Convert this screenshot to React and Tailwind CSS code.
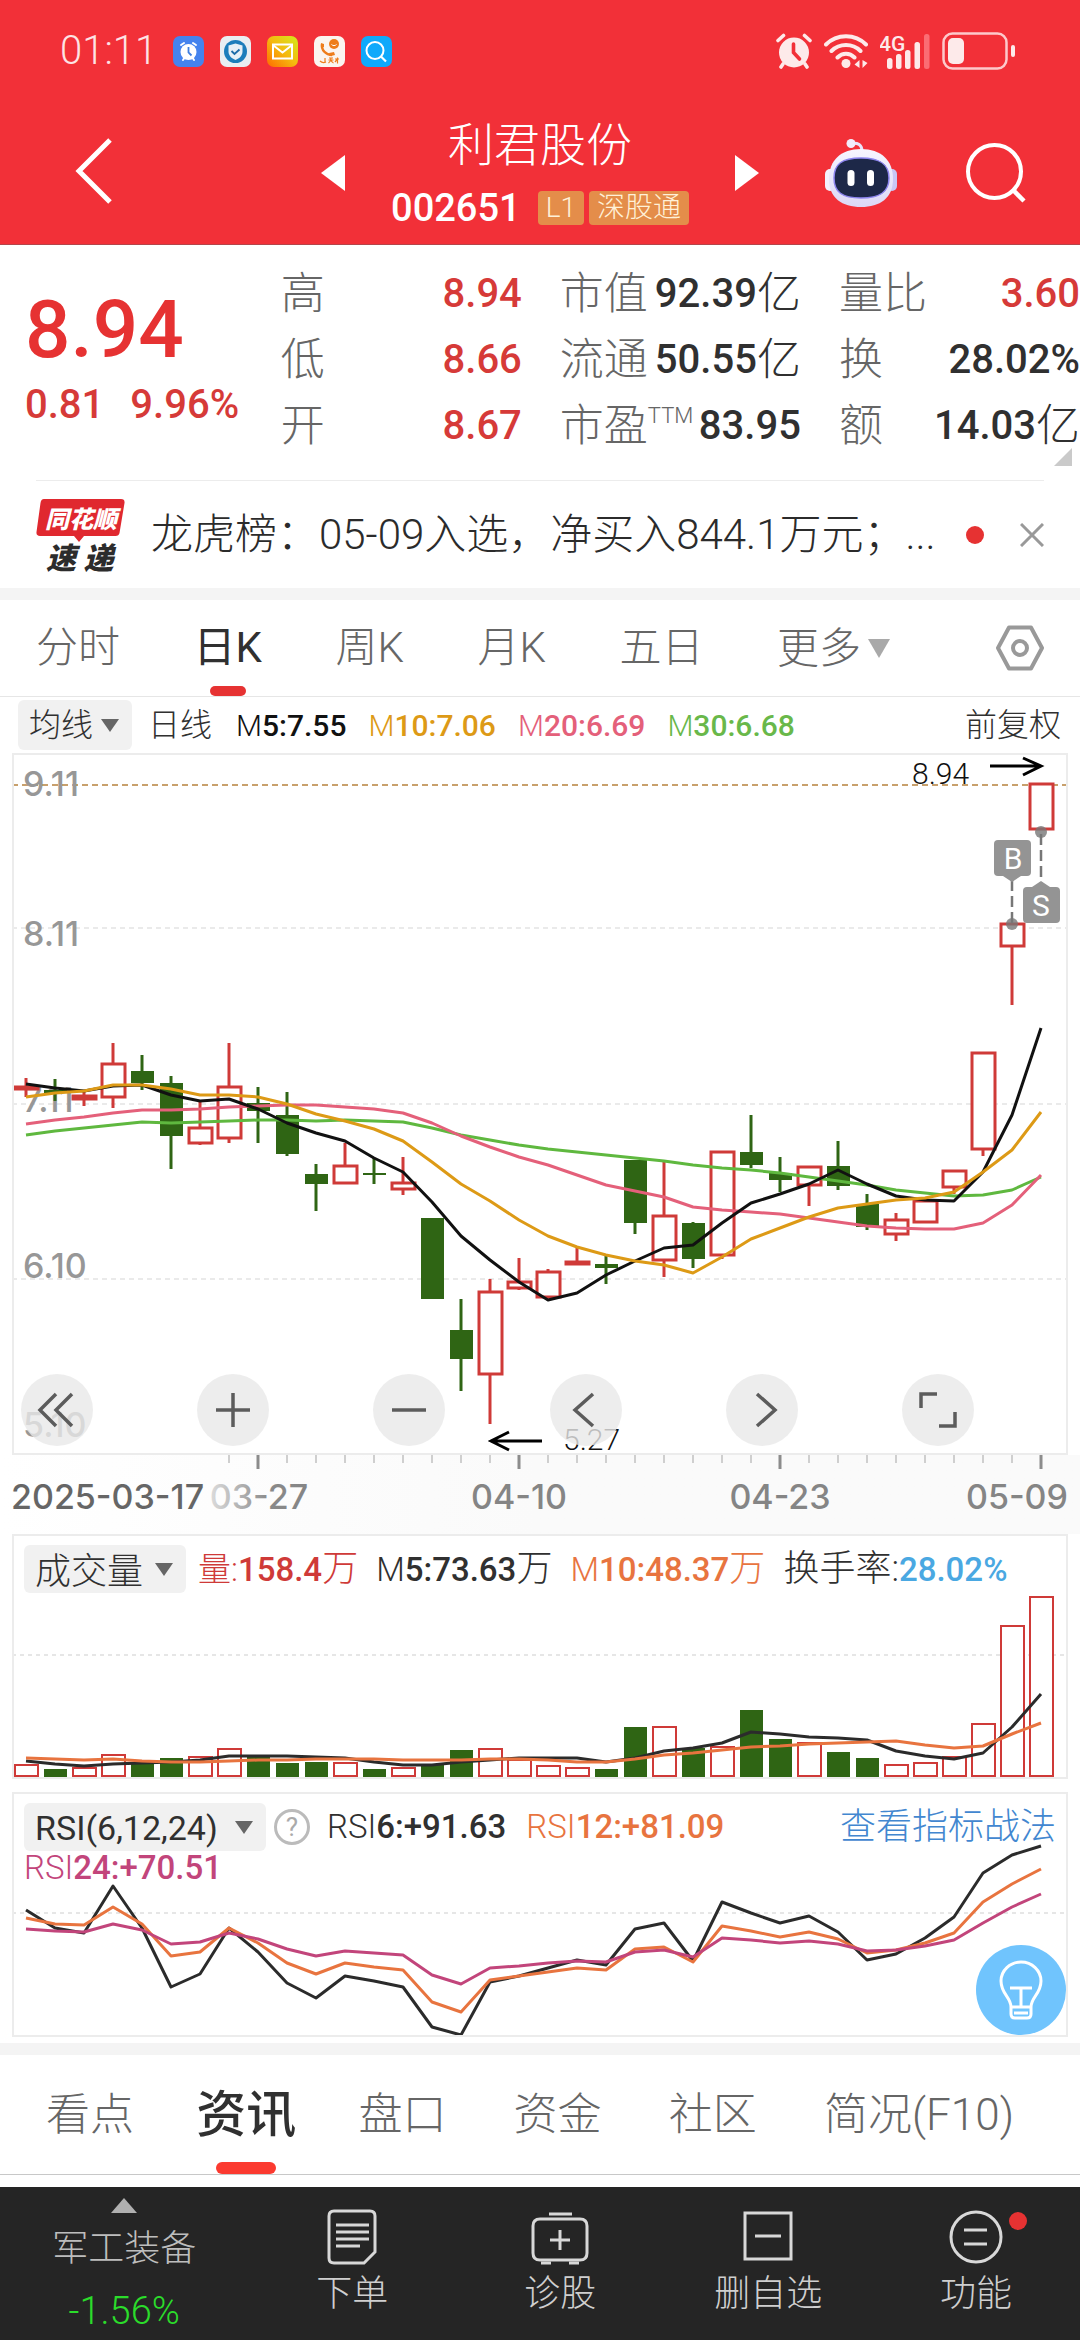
import React, { useState } from "react";

const STEP = 29;
const FIRST_X = 14;
const RED = "#cf3a38";
const GREEN = "#2f6514";

// up, body top, body bottom, wick top, wick bottom
const CANDLES = [
  [1, 332, 336, 324, 343],
  [0, 336, 339, 325, 347],
  [1, 341, 346, 338, 352],
  [1, 309, 344, 289, 354],
  [0, 317, 329, 301, 336],
  [0, 329, 382, 322, 415],
  [1, 373, 390, 348, 391],
  [1, 332, 385, 289, 389],
  [0, 349, 357, 333, 389],
  [0, 361, 400, 338, 402],
  [0, 420, 430, 410, 457],
  [1, 411, 430, 389, 430],
  [0, 419, 421, 404, 430],
  [1, 428, 436, 403, 441],
  [0, 464, 545, 464, 545],
  [0, 576, 605, 545, 637],
  [1, 537, 621, 525, 670],
  [1, 527, 535, 504, 536],
  [1, 517, 544, 515, 544],
  [1, 507, 511, 494, 511],
  [0, 510, 514, 502, 530],
  [0, 406, 469, 406, 480],
  [1, 461, 507, 408, 523],
  [0, 469, 505, 468, 514],
  [1, 397, 502, 397, 505],
  [0, 398, 411, 361, 414],
  [0, 419, 426, 403, 438],
  [1, 412, 432, 412, 452],
  [0, 412, 432, 387, 436],
  [0, 450, 473, 440, 476],
  [1, 465, 481, 459, 487],
  [1, 446, 469, 446, 469],
  [1, 416, 434, 416, 440],
  [1, 298, 396, 298, 402],
  [1, 169, 193, 169, 251],
  [1, 29, 76, 29, 76],
];

const MA_LINES = [
  {
    color: "#5fb83f",
    ys: [381, 377, 374, 371, 368, 369, 368, 367, 366, 366, 367, 366, 367, 368, 374, 381, 386, 391, 395, 398, 401, 404, 407, 411, 414, 416, 419, 423, 427, 431, 436, 439, 442, 441, 436, 423],
  },
  {
    color: "#e4607a",
    ys: [370, 366, 363, 359, 356, 356, 355, 353, 352, 351, 351, 353, 355, 359, 369, 382, 393, 403, 411, 421, 431, 437, 443, 453, 456, 458, 460, 464, 468, 472, 474, 475, 475, 469, 451, 421],
  },
  {
    color: "#111111",
    ys: [330, 334, 337, 332, 331, 341, 347, 345, 355, 369, 379, 387, 404, 418, 448, 482, 506, 528, 546, 539, 521, 507, 494, 491, 469, 449, 440, 430, 416, 430, 442, 446, 447, 418, 361, 274],
  },
  {
    color: "#dd9a16",
    ys: [343, 339, 337, 331, 331, 335, 341, 341, 343, 350, 360, 367, 375, 387, 408, 430, 447, 466, 482, 493, 501, 507, 511, 519, 503, 485, 474, 463, 454, 450, 446, 444, 438, 418, 396, 358],
  },
];

const VOLUME_TOPS = [231, 235, 234, 221, 229, 224, 223, 215, 223, 229, 228, 229, 235, 234, 231, 216, 215, 226, 232, 234, 235, 193, 193, 214, 213, 176, 205, 209, 218, 224, 231, 229, 223, 190, 92, 63];

const VOLUME_LINES = [
  {
    color: "#2b2b2b",
    ys: [227, 230, 232, 230, 229, 228, 226, 222, 222, 222, 223, 224, 228, 231, 231, 228, 226, 224, 224, 224, 228, 224, 217, 214, 209, 198, 200, 203, 204, 206, 217, 222, 225, 219, 193, 160],
  },
  {
    color: "#e8743f",
    ys: [224, 225, 226, 225, 227, 228, 228, 227, 226, 226, 225, 225, 225, 226, 226, 226, 225, 225, 226, 228, 228, 225, 221, 219, 216, 213, 212, 210, 209, 208, 207, 211, 214, 212, 200, 189],
  },
];

const RSI_LINES = [
  {
    color: "#2b2b2b",
    ys: [118, 136, 141, 94, 136, 195, 182, 136, 160, 191, 206, 184, 189, 195, 235, 243, 190, 184, 176, 168, 173, 137, 131, 169, 110, 121, 131, 124, 140, 168, 162, 146, 125, 81, 63, 54],
  },
  {
    color: "#e8743f",
    ys: [126, 132, 133, 115, 132, 164, 160, 136, 151, 171, 182, 171, 175, 178, 210, 220, 188, 184, 180, 176, 178, 157, 155, 170, 134, 139, 145, 140, 147, 161, 158, 151, 141, 110, 92, 77],
  },
  {
    color: "#c2457b",
    ys: [137, 139, 140, 132, 138, 152, 150, 141, 147, 157, 164, 159, 161, 163, 183, 192, 176, 174, 171, 169, 170, 160, 158, 165, 146, 148, 151, 149, 152, 159, 158, 154, 148, 131, 115, 102],
  },
];

const QUOTES = [
  { label: "高", value: "8.94", up: true },
  { label: "市值", value: "92.39", unit: "亿" },
  { label: "量比", value: "3.60", up: true },
  { label: "低", value: "8.66", up: true },
  { label: "流通", value: "50.55", unit: "亿" },
  { label: "换", value: "28.02%" },
  { label: "开", value: "8.67", up: true },
  { label: "市盈", sup: "TTM", value: "83.95" },
  { label: "额", value: "14.03", unit: "亿" },
];

const PERIODS = ["分时", "日K", "周K", "月K", "五日"];
const SECTIONS = ["看点", "资讯", "盘口", "资金", "社区", "简况(F10)"];

const xAt = (i) => FIRST_X + STEP * i;
const toPoints = (ys) => ys.map((y, i) => `${xAt(i)},${y}`).join(" ");

function Lines({ lines }) {
  return lines.map((l) => (
    <polyline
      key={l.color}
      points={toPoints(l.ys)}
      fill="none"
      stroke={l.color}
      strokeWidth="3"
      strokeLinejoin="round"
    />
  ));
}

/* ---------- status bar ---------- */

function StatusBar() {
  return (
    <div className="flex h-[102px] items-center justify-between pl-[60px] pr-[64px]">
      <div className="flex items-center gap-4">
        <span className="text-[40px] leading-none font-light text-[#fde3e4]">01:11</span>
        <svg width="31" height="31" viewBox="0 0 31 31">
          <rect width="31" height="31" rx="7" fill="#4583ee" />
          <circle cx="15.500" cy="16" r="8" fill="#fff" />
          <path d="M8 9l3-2M23 9l-3-2M10 24l2-3M21 24l-2-3" stroke="#fff" strokeWidth="2" strokeLinecap="round" />
          <path d="M15.500 11v5.500l3 3" stroke="#3f7fe0" strokeWidth="1.800" fill="none" />
        </svg>
        <svg width="31" height="31" viewBox="0 0 31 31">
          <rect width="31" height="31" rx="7" fill="#e9eef2" />
          <circle cx="15.500" cy="15.500" r="11.500" fill="#1c7dbb" />
          <path d="M15.500 7.500l7 2v6c0 4-3 7-7 8.500-4-1.500-7-4.500-7-8.500v-6z" fill="#e6f0f6" />
          <path d="M11.500 15l3 3 5-4.500" stroke="#1c6ca8" strokeWidth="1.800" fill="none" />
        </svg>
        <svg width="31" height="31" viewBox="0 0 31 31">
          <defs>
            <linearGradient id="mail" x1="0" y1="1" x2="1" y2="0">
              <stop offset="0" stopColor="#ff6a00" />
              <stop offset="0.5" stopColor="#f5b90f" />
              <stop offset="1" stopColor="#d2ec1c" />
            </linearGradient>
          </defs>
          <rect width="31" height="31" rx="7" fill="url(#mail)" />
          <rect x="6" y="8.500" width="19" height="14" fill="none" stroke="#fff" strokeWidth="2" />
          <path d="M6.500 9.500l9 7 9-7" stroke="#fff" strokeWidth="2" fill="none" />
        </svg>
        <svg width="31" height="31" viewBox="0 0 31 31">
          <rect width="31" height="31" rx="7" fill="#fbf5f0" />
          <circle cx="20" cy="8" r="5" fill="#ee7d1b" />
          <path d="M8 8c-1 6 4 11 10 11" stroke="#ee7d1b" strokeWidth="2.500" fill="none" />
          <path d="M7 7l3 1v3l-3 1zM15 17l5-1 1 3-4 1z" fill="#ee7d1b" />
          <path d="M17.500 8.500c1.500 1.500 3.500 1.500 5 0" stroke="#fff" fill="none" />
          <path d="M6 25c2 2 4 2 6 1M11 22v4M15 22h4M14.500 24h5M17 22c0 2-1 4-2.500 5M17 24c.5 1.500 1 2.500 2.500 3M21 23h4M23.500 21.500v6M23.500 23l-2.500 3" stroke="#ee7d1b" strokeWidth="1.200" fill="none" />
        </svg>
        <svg width="31" height="31" viewBox="0 0 31 31">
          <rect width="31" height="31" rx="7" fill="#0fa9fb" />
          <circle cx="14" cy="14.500" r="8.500" fill="none" stroke="#fff" strokeWidth="2" />
          <path d="M20 20.500l5 5" stroke="#fff" strokeWidth="2.200" />
        </svg>
      </div>
      <div className="flex items-center gap-3 text-[#fdeaea]">
        <svg width="36" height="36" viewBox="0 0 36 36" fill="none">
          <circle cx="18" cy="19.500" r="15" fill="currentColor" />
          <path d="M2 7.500L7.500 2.500M34 7.500L28.500 2.500M7 31l-2 3M29 31l2 3" stroke="currentColor" strokeWidth="3.600" strokeLinecap="round" />
          <path d="M17.500 11v8.500l6 6.500" stroke="#f23038" strokeWidth="3.600" strokeLinecap="round" />
        </svg>
        <svg width="44" height="36" viewBox="0 0 44 36" fill="none">
          <path d="M2 11.500c11-11 29-11 40 0M7.500 18c8-8 21-8 29 0M13.500 24.500c5-5 12-5 17 0" stroke="currentColor" strokeWidth="4" strokeLinecap="round" />
          <circle cx="22" cy="30.500" r="4.500" fill="currentColor" />
          <path d="M35.500 27v8l-5-3.500zM38.500 27v8l5-5z" fill="currentColor" />
        </svg>
        <svg width="50" height="36" viewBox="0 0 50 36" className="font-medium">
          <text x="-1" y="18" fontSize="21" fill="currentColor">4G</text>
          <rect x="7" y="25" width="5.500" height="11" rx="2.500" fill="currentColor" />
          <rect x="16" y="21" width="5.500" height="15" rx="2.500" fill="currentColor" />
          <rect x="25" y="17" width="5.500" height="19" rx="2.500" fill="currentColor" />
          <rect x="34.500" y="9" width="5.500" height="27" rx="2.500" fill="currentColor" />
          <rect x="44" y="1" width="5.500" height="35" rx="2.500" fill="#fb6d74" />
        </svg>
        <svg width="74" height="38" viewBox="0 0 74 38" fill="none">
          <rect x="1.500" y="1.500" width="63" height="35" rx="9" stroke="#fdc9cb" strokeWidth="2.500" />
          <rect x="6" y="6" width="16" height="26" rx="5" fill="currentColor" />
          <rect x="69" y="13" width="4" height="12" rx="2" fill="currentColor" />
        </svg>
      </div>
    </div>
  );
}

function Robot() {
  return (
    <svg width="74" height="70" viewBox="0 0 74 70">
      <defs>
        <linearGradient id="shell" x1="0" y1="0" x2="0" y2="1">
          <stop offset="0" stopColor="#f7f5ff" />
          <stop offset="1" stopColor="#dcd8f6" />
        </linearGradient>
      </defs>
      <path d="M27 5.500c7-1 11 1 11 8" stroke="#e9e4fa" strokeWidth="3" fill="none" />
      <circle cx="27" cy="5.500" r="4.500" fill="#f2ecfb" />
      <rect x="1" y="31" width="10" height="22" rx="5" fill="#f4f1fd" />
      <rect x="63" y="31" width="10" height="22" rx="5" fill="#c9c7f5" />
      <path d="M37 11c20 0 32 11 32 30S56 69 37 69 5 60 5 41s12-30 32-30z" fill="url(#shell)" />
      <path d="M37 20c19 0 28 6 28 20s-9 20-28 20S10 54 10 40s8-20 27-20z" fill="#1d2848" stroke="#8c84ee" strokeWidth="1.500" />
      <rect x="23.500" y="32" width="7" height="16" rx="3.500" fill="#fff" />
      <rect x="43" y="32" width="7" height="16" rx="3.500" fill="#fff" />
    </svg>
  );
}

function Header() {
  return (
    <header className="border-b border-[#b5454a] bg-[#f23038] text-white">
      <StatusBar />
      <div className="grid h-[142px] grid-cols-[1fr_auto_1fr] items-center">
        <button aria-label="返回" className="justify-self-start pb-1 pl-[75px]">
          <svg width="38" height="66" viewBox="0 0 38 66" fill="none">
            <path d="M35 2L4 33l31 31" stroke="#fff" strokeWidth="5" />
          </svg>
        </button>
        <div className="flex w-[438px] items-center justify-between">
          <button aria-label="上一只">
            <svg width="24" height="36" viewBox="0 0 24 36">
              <path d="M24 0v36L0 18z" fill="#fff" />
            </svg>
          </button>
          <div className="flex flex-col items-center pt-2">
            <h1 className="text-[46px] leading-[62px] font-light">利君股份</h1>
            <div className="flex h-16 items-center gap-[5px]">
              <span className="pr-3 text-[38px] leading-none font-medium">002651</span>
              <span className="flex h-[34px] items-center rounded-sm bg-[#e48d4a] px-2 text-[28px] font-light text-[#fff1d8]">L1</span>
              <span className="flex h-[34px] items-center rounded-sm bg-[#e48d4a] px-2 text-[28px] font-light text-[#fff1d8]">深股通</span>
            </div>
          </div>
          <button aria-label="下一只">
            <svg width="24" height="36" viewBox="0 0 24 36">
              <path d="M0 0v36l24-18z" fill="#fff" />
            </svg>
          </button>
        </div>
        <div className="flex items-center gap-[68px] justify-self-end pr-[54px]">
          <button aria-label="智能助手">
            <Robot />
          </button>
          <button aria-label="搜索">
            <svg width="60" height="60" viewBox="0 0 60 60" fill="none" stroke="#fff">
              <circle cx="28.500" cy="28.500" r="26.500" strokeWidth="4" />
              <path d="M47 47l11 11" strokeWidth="4.500" />
            </svg>
          </button>
        </div>
      </div>
    </header>
  );
}

/* ---------- quote ---------- */

function QuotePanel() {
  return (
    <section className="relative flex h-[235px] pt-4">
      <div className="w-[26%] shrink-0 pl-[25px] pt-[28px] font-medium text-[#e63232]">
        <p className="text-[80px] leading-[82px]">8.94</p>
        <p className="flex gap-[26px] pt-[10px] text-[40px] leading-[48px] text-[#d63a38]">
          <span>0.81</span>
          <span>9.96%</span>
        </p>
      </div>
      <dl className="grid flex-1 auto-rows-[66px] grid-cols-3 gap-x-[38px]">
        {QUOTES.map((q) => (
          <div key={q.label} className="flex items-center justify-between whitespace-nowrap">
            <dt className="flex text-[44px] leading-[66px] font-light text-[#666]">
              {q.label}
              {q.sup && <sup className="top-0 self-start text-[22px] leading-[46px]">{q.sup}</sup>}
            </dt>
            <dd
              className={`flex items-center text-[40px] leading-[66px] font-medium ${
                q.up ? "text-[#d63a38]" : "text-[#303030]"
              }`}
            >
              {q.value}
              {q.unit && <span className="text-[44px] font-light">{q.unit}</span>}
            </dd>
          </div>
        ))}
      </dl>
      <svg className="absolute right-2 bottom-[14px]" width="18" height="18" viewBox="0 0 18 18">
        <path d="M18 0v18H0z" fill="#cacaca" />
      </svg>
    </section>
  );
}

function NewsBar() {
  return (
    <section className="mx-[36px] flex h-[108px] items-center border-t border-[#ececec]">
      <svg width="90" height="74" viewBox="0 0 90 74" className="shrink-0 font-black italic">
        <path d="M8 1h77q4 0 3.500 4l-5 30q-.6 3-4 3H48l-5 6-5-6H4q-4 0-3.500-4l4-29q.5-4 3.500-4z" fill="#e0282f" />
        <text x="9" y="30" fontSize="24" fill="#fff">同花顺</text>
        <text x="10" y="71" fontSize="30" fill="#2c2c2c">速 递</text>
      </svg>
      <a href="#news" className="ml-[25px] min-w-0 flex-1 truncate text-[42px] leading-[60px] font-light text-[#2b2b2b]">
        龙虎榜：05-09入选，净买入844.1万元；...
      </a>
      <span className="mr-[36px] size-[18px] rounded-full bg-[#e63232]" />
      <button aria-label="关闭">
        <svg width="24" height="24" viewBox="0 0 24 24">
          <path d="M1 1l22 22M23 1L1 23" stroke="#999" strokeWidth="3" />
        </svg>
      </button>
    </section>
  );
}

function PeriodTabs({ period, onChange }) {
  return (
    <nav className="flex h-[97px] items-stretch justify-between border-b border-[#e6e6e6] pr-[36px] pl-[36px] text-[42px] font-light text-[#666]">
      <div className="flex w-[854px] items-stretch justify-between">
        {PERIODS.map((p) => (
          <button
            key={p}
            onClick={() => onChange(p)}
            className={`flex flex-col items-center justify-end ${p === period ? "font-normal text-[#303030]" : ""}`}
          >
            <span className="leading-[76px]">{p}</span>
            <span className={`h-[10px] w-[36px] rounded-md ${p === period ? "bg-[#e63232]" : ""}`} />
          </button>
        ))}
        <button aria-haspopup="menu" className="flex items-center gap-[7px]">
          更多
          <svg width="22" height="19" viewBox="0 0 22 19">
            <path d="M0 0h22L11 19z" fill="#a9a9a9" />
          </svg>
        </button>
      </div>
      <button aria-label="设置">
        <svg width="48" height="48" viewBox="0 0 48 48" fill="none" stroke="#999" strokeWidth="4">
          <path d="M13 3.500h22L46 24 35 44.500H13L2 24z" strokeLinejoin="round" />
          <circle cx="24" cy="24" r="7" />
        </svg>
      </button>
    </nav>
  );
}

/* ---------- charts ---------- */

function PickList({ label, options, className }) {
  return (
    <div className={`relative flex shrink-0 items-center rounded-md bg-[#f1f1f1] text-[#303030] ${className}`}>
      <select aria-label={label} className="h-full w-full appearance-none bg-transparent pl-[11px]">
        {options.map((o) => (
          <option key={o}>{o}</option>
        ))}
      </select>
      <svg className="pointer-events-none absolute right-[13px]" width="18" height="13" viewBox="0 0 18 13">
        <path d="M0 0h18L9 13z" fill="#666" />
      </svg>
    </div>
  );
}

function Reading({ name, value, unit, className }) {
  return (
    <span className={`whitespace-nowrap font-medium ${className}`}>
      <span className="font-light">{name}</span>
      {value}
      {unit && <span className="text-[36px] font-light">{unit}</span>}
    </span>
  );
}

function MaLegend() {
  return (
    <div className="flex h-[56px] items-center pr-[19px] pl-[18px] text-[30px] text-[#303030]">
      <PickList
        label="主图指标"
        options={["均线", "BOLL"]}
        className="h-[50px] w-[114px] text-[32px] font-light"
      />
      <span className="ml-4 text-[32px] font-light">日线</span>
      <div className="ml-6 flex flex-1 gap-[22px]">
        <Reading name="M" value="5:7.55" className="text-[#111]" />
        <Reading name="M" value="10:7.06" className="text-[#dd9a16]" />
        <Reading name="M" value="20:6.69" className="text-[#e4607a]" />
        <Reading name="M" value="30:6.68" className="text-[#69b84a]" />
      </div>
      <button className="text-[32px] font-light">前复权</button>
    </div>
  );
}

function CandleSvg() {
  return (
    <svg viewBox="2 1 1052 698" className="col-start-1 row-start-1 block w-full">
      <line x1="0" x2="1056" y1="31" y2="31" stroke="#c8a06c" strokeWidth="2" strokeDasharray="6 4" />
      {[174, 350, 525].map((y) => (
        <line key={y} x1="0" x2="1056" y1={y} y2={y} stroke="#e3e3e3" strokeWidth="1.500" strokeDasharray="5 4" />
      ))}
      <g className="font-['Inter',sans-serif] font-medium" fontSize="34" fill="#979797">
        <text x="11" y="42">9.11</text>
        <text x="11" y="192">8.11</text>
        <text x="11" y="358">7.11</text>
        <text x="11" y="524">6.10</text>
        <text x="11" y="683">5.10</text>
      </g>
      {CANDLES.map(([up, top, bottom, high, low], i) => {
        const x = xAt(i);
        const color = up ? RED : GREEN;
        return (
          <g key={i} stroke={color} strokeWidth="3">
            {high < top && <line x1={x} x2={x} y1={high} y2={top} />}
            {low > bottom && <line x1={x} x2={x} y1={bottom} y2={low} />}
            {up ? (
              <rect
                x={x - 11}
                y={top + 1}
                width="23"
                height={Math.max(bottom - top - 2, 2)}
                fill="#fff"
              />
            ) : (
              <rect x={x - 11} y={top} width="23" height={bottom - top} fill={color} stroke="none" />
            )}
          </g>
        );
      })}
      <Lines lines={MA_LINES} />

      {/* high and low of the visible range */}
      <g fontSize="30" fill="#111" className="font-light">
        <text x="900" y="30">8.94</text>
        <text x="551" y="696">5.27</text>
      </g>
      <g stroke="#000" strokeWidth="3" fill="none">
        <path d="M978 12h51M1011 4l18 8-18 9" />
        <path d="M530 687h-51M497 678l-18 9 18 9" />
      </g>

      {/* trade marks */}
      <g stroke="#777" strokeWidth="2.500" strokeDasharray="11 5">
        <line x1="1000" x2="1000" y1="126" y2="170" />
        <line x1="1029" x2="1029" y1="80" y2="130" />
      </g>
      <g fill="#777" fillOpacity="0.800">
        <circle cx="1000" cy="170" r="6" />
        <circle cx="1029" cy="78" r="6" />
      </g>
      <g fill="#949494">
        <rect x="982" y="86" width="37" height="36" rx="4" />
        <path d="M991 122h18l-9 6z" />
        <rect x="1011" y="133" width="37" height="36" rx="4" />
        <path d="M1020 133h18l-9-6z" />
      </g>
      <g fontSize="30" fill="#fff" textAnchor="middle">
        <text x="1001" y="115">B</text>
        <text x="1029" y="162">S</text>
      </g>
    </svg>
  );
}

const CHART_BUTTONS = [
  { label: "最早", d: "M35 20L19 36l16 16M51 20L35 36l16 16" },
  { label: "放大", d: "M19 36h34M36 19v34" },
  { label: "缩小", d: "M19 36h34" },
  { label: "向左", d: "M43 20L25 36l18 16" },
  { label: "向右", d: "M31 20l18 16-18 16" },
  { label: "全屏", d: "M19 34V20h16M53 38v14H37" },
];

function CandleChart() {
  return (
    <div className="mx-3 grid border-2 border-[#ececec]">
      <CandleSvg />
      <div className="z-10 col-start-1 row-start-1 flex items-end justify-between self-end pr-[92px] pb-[7px] pl-[7px]">
        {CHART_BUTTONS.map((b) => (
          <button key={b.label} aria-label={b.label} className="size-[72px] rounded-full bg-[#e8e8e8]/80">
            <svg width="72" height="72" viewBox="0 0 72 72" fill="none">
              <path d={b.d} stroke="#5c5c5c" strokeWidth="3.500" />
            </svg>
          </button>
        ))}
      </div>
    </div>
  );
}

function DateAxis() {
  return (
    <div className="bg-gradient-to-r from-white via-[#fafafa] to-[#fafafa] px-3">
      <svg viewBox="0 0 1056 79" className="block w-full overflow-visible">
        <defs>
          <linearGradient id="fade" x1="0" x2="1" y1="0" y2="0">
            <stop offset="0" stopColor="#dcdcdc" />
            <stop offset="0.6" stopColor="#8a8a8a" />
            <stop offset="1" stopColor="#858585" />
          </linearGradient>
        </defs>
        {CANDLES.map((_, i) =>
          i < 7 ? null : (i + 1) % 9 === 0 ? (
            <line key={i} x1={xAt(i)} x2={xAt(i)} y1="0" y2="14" stroke="#8c8c8c" strokeWidth="3" />
          ) : (
            <line key={i} x1={xAt(i)} x2={xAt(i)} y1="0" y2="8" stroke="#cfcfcf" strokeWidth="2" />
          )
        )}
        <g className="font-['Inter',sans-serif] font-medium" fontSize="34" fill="#858585">
          <text x="-1" y="54" fill="#666">2025-03-17</text>
          <text x="247" y="54" textAnchor="middle" fill="url(#fade)">03-27</text>
          <text x="507" y="54" textAnchor="middle">04-10</text>
          <text x="768" y="54" textAnchor="middle">04-23</text>
          <text x="1056" y="54" textAnchor="end">05-09</text>
        </g>
      </svg>
    </div>
  );
}

function VolumeChart() {
  return (
    <section className="mx-3 grid border-2 border-[#ececec]">
      <svg viewBox="2 2 1052 241" className="col-start-1 row-start-1 block w-full">
        <line x1="0" x2="1056" y1="121" y2="121" stroke="#e6e6e6" strokeWidth="2" strokeDasharray="4 4" />
        {VOLUME_TOPS.map((y, i) =>
          CANDLES[i][0] ? (
            <rect key={i} x={xAt(i) - 11} y={y} width="23" height={242 - y} fill="#fff" stroke={RED} strokeWidth="2" />
          ) : (
            <rect key={i} x={xAt(i) - 11} y={y} width="23" height={243 - y} fill={GREEN} />
          )
        )}
        <Lines lines={VOLUME_LINES} />
      </svg>
      <div className="col-start-1 row-start-1 mt-[9px] flex h-[48px] items-center gap-[18px] pl-[10px] text-[33px]">
        <PickList
          label="副图指标一"
          options={["成交量", "成交额"]}
          className="h-[48px] w-[162px] text-[36px] font-light"
        />
        <Reading name="量:" value="158.4" unit="万" className="-ml-[6px] text-[#cf3a38]" />
        <Reading name="M" value="5:73.63" unit="万" className="text-[#303030]" />
        <Reading name="M" value="10:48.37" unit="万" className="text-[#e8743f]" />
        <span className="font-medium whitespace-nowrap text-[#4aa8e2]">
          <span className="text-[36px] font-light text-[#303030]">换手率:</span>28.02%
        </span>
      </div>
    </section>
  );
}

function RsiChart() {
  return (
    <section className="relative mx-3 mt-[13px] grid border-2 border-[#ececec]">
      <svg viewBox="2 2 1052 241" className="col-start-1 row-start-1 block w-full">
        <line x1="0" x2="1056" y1="121" y2="121" stroke="#e6e6e6" strokeWidth="2" strokeDasharray="4 4" />
        <Lines lines={RSI_LINES} />
      </svg>
      <div className="col-start-1 row-start-1 mt-[9px] pr-[10px] pl-[10px] text-[33px]">
        <div className="flex h-[48px] items-center">
          <PickList
            label="副图指标二"
            options={["RSI(6,12,24)", "MACD"]}
            className="h-[48px] w-[242px] text-[34px]"
          />
          <button
            aria-label="指标说明"
            className="ml-[8px] flex size-[36px] items-center justify-center rounded-full border-[3px] border-[#bbb] text-[26px] leading-none text-[#aaa]"
          >
            ?
          </button>
          <Reading name="RSI" value="6:+91.63" className="ml-[17px] text-[#303030]" />
          <Reading name="RSI" value="12:+81.09" className="ml-[20px] text-[#e8743f]" />
          <a href="#guide" className="ml-auto text-[36px] font-light whitespace-nowrap text-[#4287d0]">
            查看指标战法
          </a>
        </div>
        <Reading name="RSI" value="24:+70.51" className="block leading-[34px] text-[#c2457b]" />
      </div>
      <button
        aria-label="提示"
        className="absolute right-0 bottom-0 flex size-[90px] items-center justify-center rounded-full bg-[#70c4fd]"
      >
        <svg width="44" height="60" viewBox="0 0 44 60" fill="none" stroke="#fff" strokeWidth="3">
          <path d="M12 47c0-10-10-13-10-26a20 19 0 0 1 40 0c0 13-10 16-10 26v7q0 4-4 4H16q-4 0-4-4z" />
          <path d="M11 28h22M22 28v19M13 47h18M15 53h14" />
        </svg>
      </button>
    </section>
  );
}

/* ---------- bottom ---------- */

function SectionTabs({ section, onChange }) {
  return (
    <nav className="flex h-[120px] justify-between border-b border-[#c8c8c8] pr-[66px] pl-[46px] text-[44px] font-light text-[#666]">
      {SECTIONS.map((s) => (
        <button
          key={s}
          onClick={() => onChange(s)}
          className={`flex flex-col items-center justify-end ${
            s === section ? "-mx-[5px] text-[50px] font-medium text-[#303030]" : ""
          }`}
        >
          <span className="leading-[94px]">{s}</span>
          <span className={`h-[12px] w-[60px] rounded-full ${s === section ? "bg-[#fb3a30]" : ""}`} />
        </button>
      ))}
    </nav>
  );
}

function NavItem({ label, dot, children }) {
  return (
    <button className="relative flex flex-1 flex-col items-center pt-[22px]">
      <svg width="60" height="56" viewBox="0 0 60 56" fill="none" stroke="#d8d8d8" strokeWidth="3">
        {children}
      </svg>
      <span className="mt-[2px] leading-[54px]">{label}</span>
      {dot && <span className="absolute top-[25px] left-1/2 ml-[33px] size-[18px] rounded-full bg-[#e63232]" />}
    </button>
  );
}

function BottomNav() {
  return (
    <footer className="flex h-[153px] bg-[#252525] text-[36px] font-light text-[#cfcfcf]">
      <button className="flex w-[23%] flex-col items-center pt-[11px]">
        <svg width="26" height="15" viewBox="0 0 26 15">
          <path d="M13 0l13 15H0z" fill="#b0b0b0" />
        </svg>
        <span className="mt-[8px] leading-[56px] text-[#bdbdbd]">军工装备</span>
        <span className="mt-[6px] text-[38px] leading-[56px] text-[#2bdc2b]">-1.56%</span>
      </button>
      <NavItem label="下单">
        <path d="M12 2h36q5 0 5 5v36L42 54H12q-5 0-5-5V7q0-5 5-5z" />
        <path d="M14 16h33M14 23h33M14 30h33M14 37h24" />
      </NavItem>
      <NavItem label="诊股">
        <path d="M19 5h23M10 10h40q7 0 7 7v27q0 7-7 7H10q-7 0-7-7V17q0-7 7-7zM20 31h20M30 21v20" />
        <path d="M11 54h10M39 54h10" />
      </NavItem>
      <NavItem label="删自选">
        <path d="M7 4h46v46H7zM17 27h26" />
      </NavItem>
      <NavItem label="功能" dot>
        <circle cx="30" cy="28" r="25" />
        <path d="M18 21h23M18 35h23" />
      </NavItem>
    </footer>
  );
}

export default function App() {
  const [period, setPeriod] = useState("日K");
  const [section, setSection] = useState("资讯");

  return (
    <div className="min-h-screen overflow-hidden bg-white font-['Roboto','Noto_Sans_CJK_SC',sans-serif]">
      <Header />
      <main>
        <QuotePanel />
        <NewsBar />
        <div className="h-3 bg-[#f4f4f4]" />
        <PeriodTabs period={period} onChange={setPeriod} />
        <MaLegend />
        <CandleChart />
        <DateAxis />
        <VolumeChart />
        <RsiChart />
        <div className="mt-[6px] h-3 bg-[#f4f4f4]" />
        <SectionTabs section={section} onChange={setSection} />
        <div className="h-3" />
      </main>
      <BottomNav />
    </div>
  );
}
